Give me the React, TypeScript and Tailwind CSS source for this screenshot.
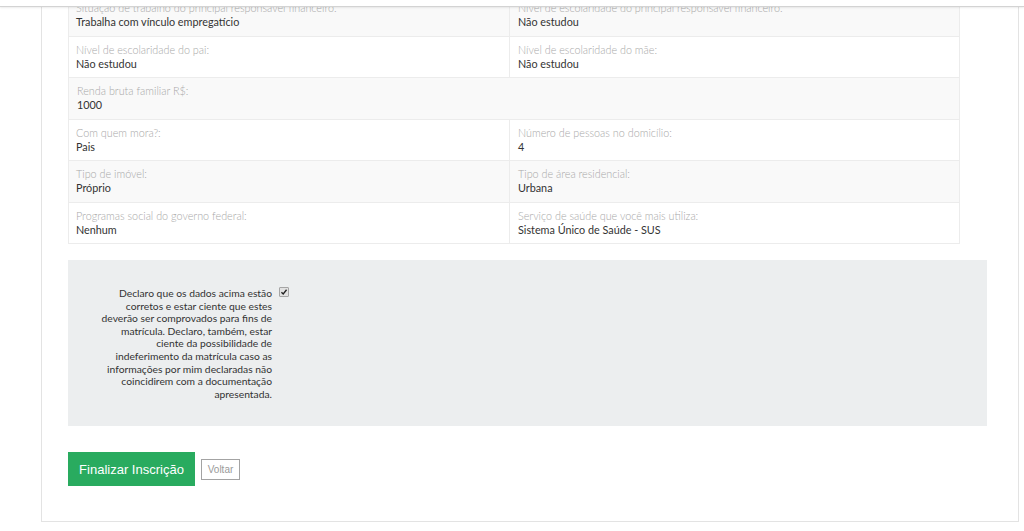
import React from "react";

type Field = { label: string; value: string };

const rows: Field[][] = [
  [
    { label: "Situação de trabalho do principal responsável financeiro:", value: "Trabalha com vínculo empregatício" },
    { label: "Nível de escolaridade do principal responsável financeiro:", value: "Não estudou" }
  ],
  [
    { label: "Nível de escolaridade do pai:", value: "Não estudou" },
    { label: "Nível de escolaridade do mãe:", value: "Não estudou" }
  ],
  [{ label: "Renda bruta familiar R$:", value: "1000" }],
  [
    { label: "Com quem mora?:", value: "Pais" },
    { label: "Número de pessoas no domicílio:", value: "4" }
  ],
  [
    { label: "Tipo de imóvel:", value: "Próprio" },
    { label: "Tipo de área residencial:", value: "Urbana" }
  ],
  [
    { label: "Programas social do governo federal:", value: "Nenhum" },
    { label: "Serviço de saúde que você mais utiliza:", value: "Sistema Único de Saúde - SUS" }
  ]
];

const declaration = [
  "Declaro que os dados acima estão",
  "corretos e estar ciente que estes",
  "deverão ser comprovados para fins de",
  "matrícula. Declaro, também, estar",
  "ciente da possibilidade de",
  "indeferimento da matrícula caso as",
  "informações por mim declaradas não",
  "coincidirem com a documentação",
  "apresentada."
];

function Cell({ field, first }: { field: Field; first: boolean }) {
  return (
    <div className={first ? "w-[441px] shrink-0 border-r border-[#ececec] pl-[7px] pt-[6px]" : "flex-1 pl-[8px] pt-[6px]"}>
      <div className="text-[10.8px] leading-[14px] font-light text-[#a8a8a8] whitespace-nowrap">{field.label}</div>
      <div className="text-[10.8px] leading-[14px] text-[#333]">{field.value}</div>
    </div>
  );
}

export default function App() {
  return (
    <div className="relative min-h-[531px] overflow-hidden bg-white font-['Lato','Liberation_Sans',sans-serif]">
      <header className="fixed left-0 right-0 top-0 z-10 h-[7px] border-b border-[#d3d3d3] bg-white shadow-[0_1px_2px_rgba(0,0,0,0.08)]" />

      <div className="ml-[41px] w-[978px] border-x border-b border-[#e3e3e3] pb-[35px] pl-[26px]">
        <div className="-mt-[5px] w-[892px] border-x border-[#ececec]">
          {rows.map((row, i) => (
            <div key={i} className={`box-border flex h-[41.5px] border-b border-[#ececec] ${i % 2 === 0 ? "bg-[#f9f9f9]" : "bg-white"}`}>
              {row.map((field, j) => (
                <Cell key={j} field={field} first={j === 0 && row.length > 1} />
              ))}
            </div>
          ))}
        </div>

        <div className="mt-[16px] flex w-[919px] bg-[#eceeef] pb-[26px] pt-[27px]">
          <label className="w-[204px] shrink-0 text-right text-[10.3px] leading-[12.6px] text-[#333]">
            {declaration.map((line, i) => (
              <div key={i} className="whitespace-nowrap">{line}</div>
            ))}
          </label>
          <span className="ml-[7px] flex h-[10px] w-[10px] items-center justify-center rounded-[1px] border border-[#a5a5a5] bg-[#e2e2e2]">
            <svg viewBox="0 0 10 10" className="h-[8px] w-[8px]">
              <path d="M1.8 5.2 L4 7.4 L8.2 2.2" fill="none" stroke="#222" strokeWidth="1.7" />
            </svg>
          </span>
        </div>

        <div className="mt-[26px] flex items-center gap-[6px] font-['Liberation_Sans',Arial,sans-serif]">
          <button type="button" className="h-[34px] w-[127px] bg-[#29ab5f] text-[13px] text-white">
            Finalizar Inscrição
          </button>
          <button type="button" className="h-[21px] w-[39px] border border-[#a3a3a3] bg-white text-[10px] text-[#9a9a9a]">
            Voltar
          </button>
        </div>
      </div>
    </div>
  );
}
